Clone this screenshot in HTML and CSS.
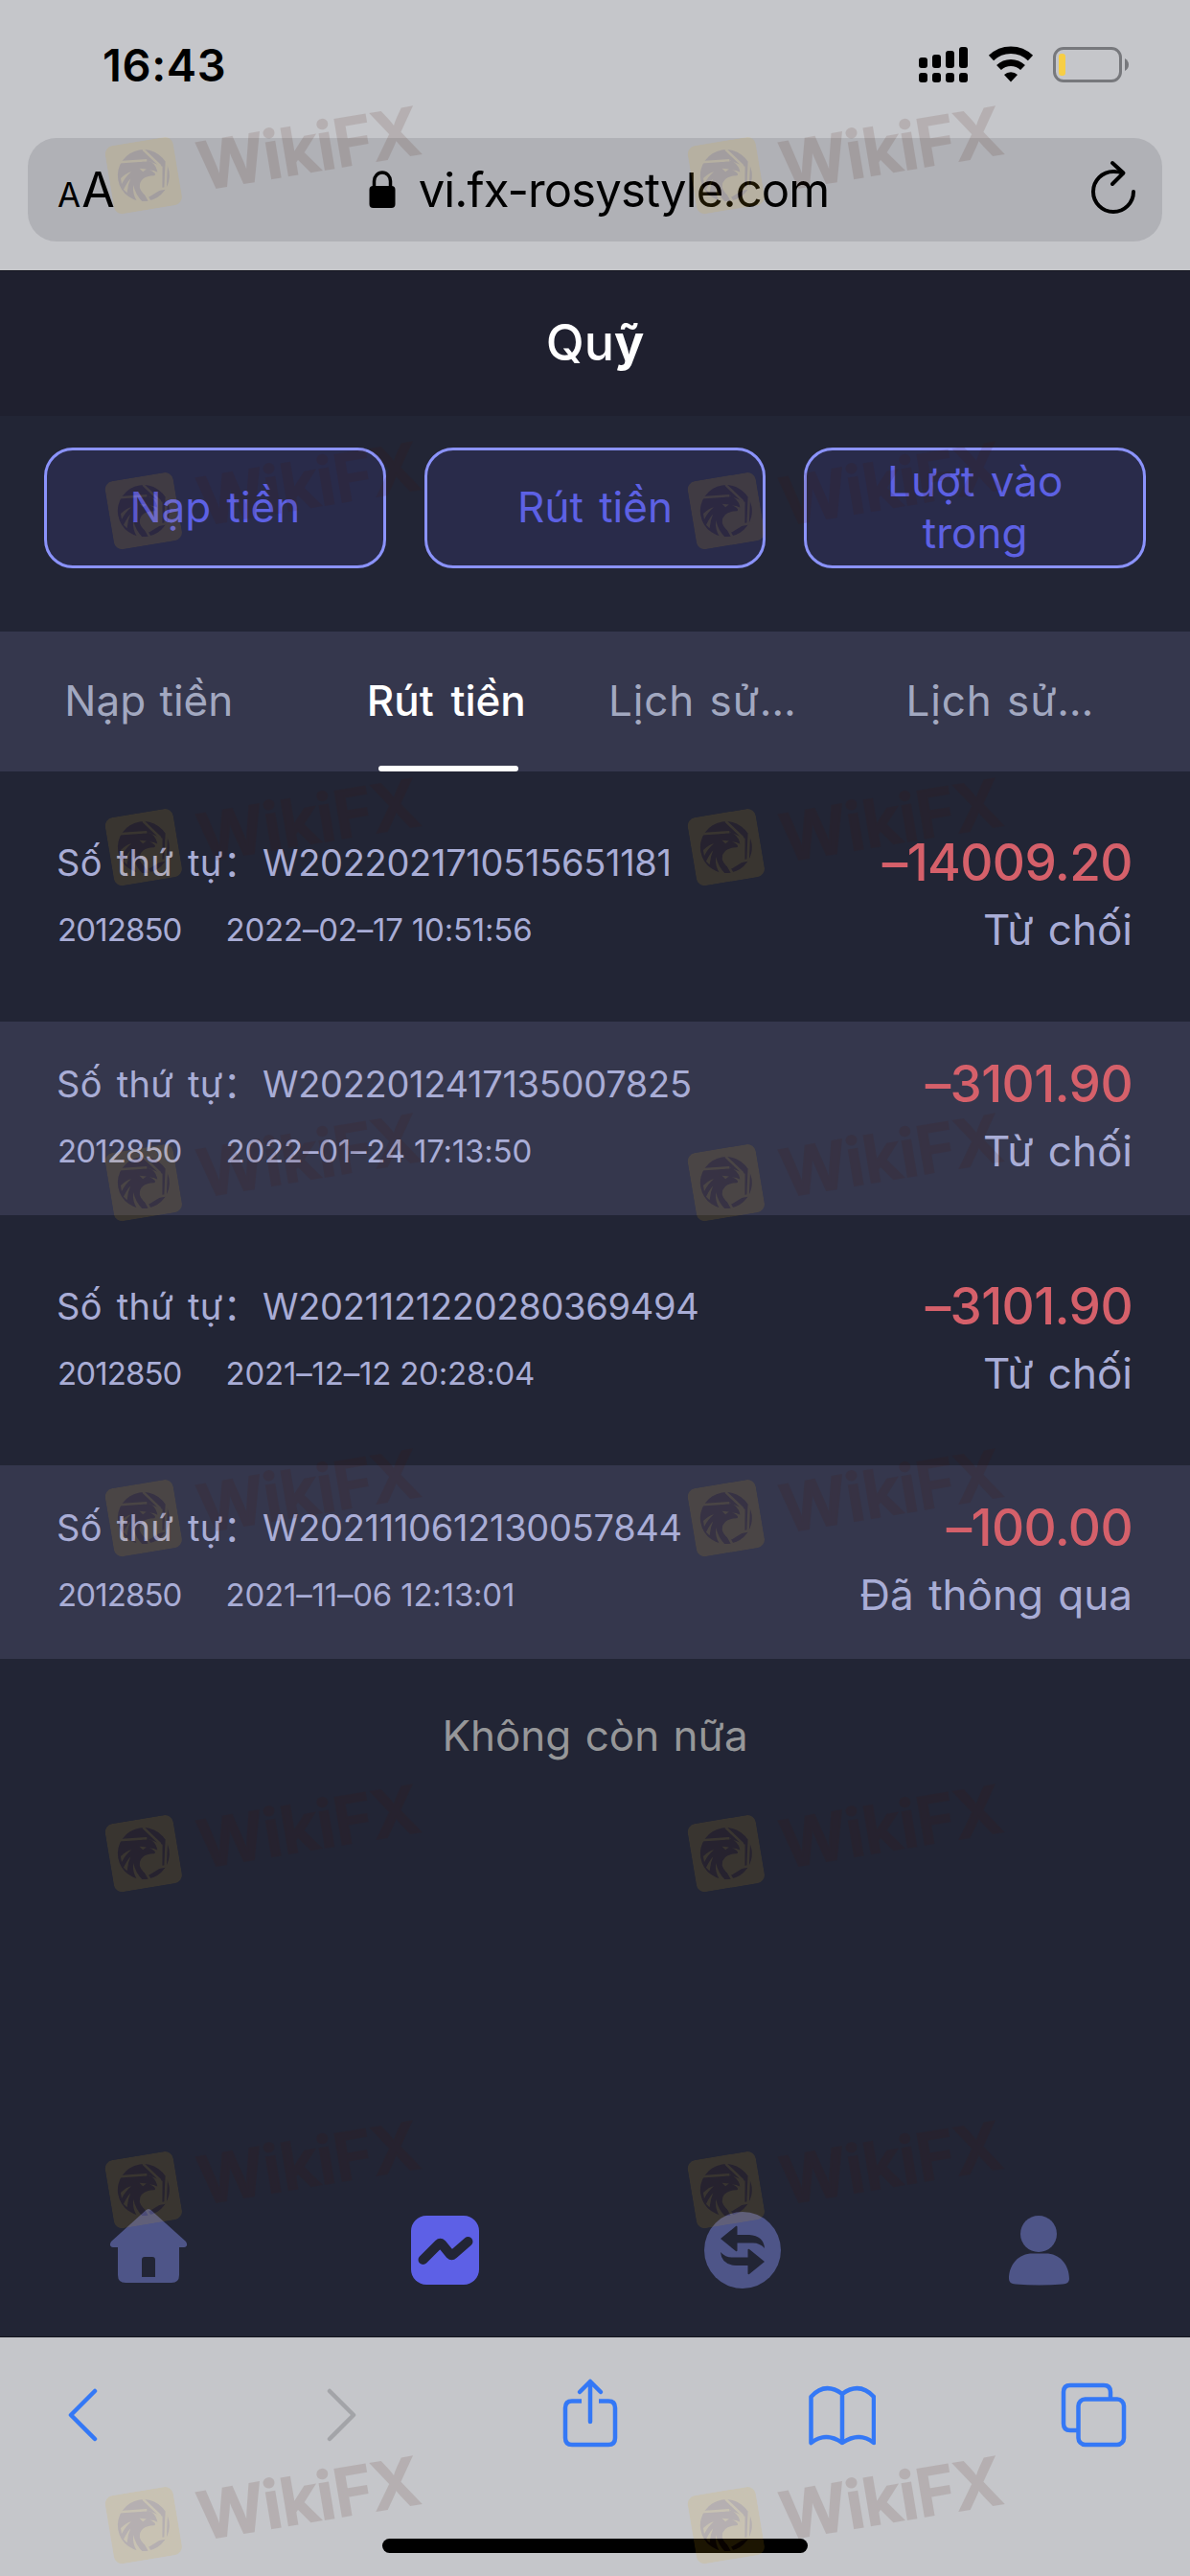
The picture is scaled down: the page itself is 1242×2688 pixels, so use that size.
FILE: index.html
```html
<!DOCTYPE html>
<html lang="vi">
<head>
    <meta charset="UTF-8">
    <meta name="viewport" content="width=device-width, initial-scale=1.0">
    <title>Quỹ</title>
    <link rel="stylesheet" href="styles.css">
</head>
<body>
    <div class="browser-top">
        <div class="status-bar">
            <span class="time">16:43</span>
            <svg class="status-icons" width="222" height="40" viewBox="0 0 222 40">
                <g fill="#000">
                    <rect x="1" y="12" width="9" height="11" rx="3"/>
                    <rect x="15" y="9" width="9" height="14" rx="3"/>
                    <rect x="29" y="5" width="9" height="18" rx="3"/>
                    <rect x="43" y="1" width="9" height="22" rx="3"/>
                    <rect x="1" y="28" width="9" height="10" rx="3"/>
                    <rect x="15" y="28" width="9" height="10" rx="3"/>
                    <rect x="29" y="28" width="9" height="10" rx="3"/>
                    <rect x="43" y="28" width="9" height="10" rx="3"/>
                </g>
                <path d="M76.500 12.500a29.500 29.500 0 0 1 41 0" fill="none" stroke="#000" stroke-width="7.500"/>
                <path d="M84.500 22.500a18 18 0 0 1 25 0" fill="none" stroke="#000" stroke-width="7"/>
                <path d="M97 37.500l-7-7.500a10 10 0 0 1 14 0z"/>
                <rect x="142.500" y="2.500" width="69" height="34" rx="9.500" fill="none" stroke="#77787c" stroke-width="3"/>
                <rect x="147" y="8" width="7" height="23" rx="3" fill="#f7ce45"/>
                <path d="M216 13q4 2.500 4 6.500t-4 6.500z" fill="#77787c"/>
            </svg>
        </div>
        <div class="url-bar">
            <span class="text-size"><small>A</small>A</span>
            <div class="url">
                <svg width="28" height="40" viewBox="0 0 28 40">
                    <rect x="0.500" y="16" width="27" height="23" rx="4"/>
                    <path d="M5.500 18v-7a8.500 9 0 0 1 17 0v7" fill="none" stroke="#000" stroke-width="3.500"/>
                </svg>
                <span>vi.fx-rosystyle.com</span>
            </div>
            <svg class="reload" width="48" height="58" viewBox="0 0 48 58" fill="none" stroke="#000" stroke-width="4" stroke-linecap="round" stroke-linejoin="round">
                <path d="M34 13.500C31 12.500 28 12 24 12A21 21 0 1 0 45 33"/>
                <path d="M23 3l11.500 10.500L23 25"/>
            </svg>
        </div>
    </div>

    <div class="app">
        <div class="header"><h1>Qu<b>ỹ</b></h1></div>

        <div class="actions">
            <button>Nạp tiền</button>
            <button>Rút tiền</button>
            <button>Lượt vào trong</button>
        </div>

        <div class="tabs">
            <div class="tab"><span>Nạp tiền</span></div>
            <div class="tab active"><span>Rút tiền</span></div>
            <div class="tab cut"><span>Lịch sử…</span></div>
            <div class="tab cut"><span>Lịch sử…</span></div>
        </div>

        <div class="list">
            <div class="item">
                <div class="left">
                    <p class="order"><span>Số thứ tự：</span>W2022021710515651181</p>
                    <p class="meta"><span class="uid">2012850</span><span>2022–02–17 10:51:56</span></p>
                </div>
                <div class="right">
                    <p class="amount">–14009.20</p>
                    <p class="state">Từ chối</p>
                </div>
            </div>
            <div class="item">
                <div class="left">
                    <p class="order"><span>Số thứ tự：</span>W2022012417135007825</p>
                    <p class="meta"><span class="uid">2012850</span><span>2022–01–24 17:13:50</span></p>
                </div>
                <div class="right">
                    <p class="amount">–3101.90</p>
                    <p class="state">Từ chối</p>
                </div>
            </div>
            <div class="item">
                <div class="left">
                    <p class="order"><span>Số thứ tự：</span>W2021121220280369494</p>
                    <p class="meta"><span class="uid">2012850</span><span>2021–12–12 20:28:04</span></p>
                </div>
                <div class="right">
                    <p class="amount">–3101.90</p>
                    <p class="state">Từ chối</p>
                </div>
            </div>
            <div class="item">
                <div class="left">
                    <p class="order"><span>Số thứ tự：</span>W2021110612130057844</p>
                    <p class="meta"><span class="uid">2012850</span><span>2021–11–06 12:13:01</span></p>
                </div>
                <div class="right">
                    <p class="amount">–100.00</p>
                    <p class="state">Đã thông qua</p>
                </div>
            </div>
        </div>
        <p class="no-more">Không còn nữa</p>

        <div class="nav">
            <svg width="82" height="86" viewBox="0 0 82 86">
                <path d="M38 1.500q3-3 6 0L80 34q3 5-2 6H73v29q0 8-8 8H17q-8 0-8-8V40H4q-5-1-2-6zM34 53v18h14V53q0-3-3-3h-8q-3 0-3 3z" fill="#4e5588"/>
            </svg>
            <svg width="82" height="86" viewBox="0 0 82 86">
                <rect x="5" y="7" width="71" height="72" rx="16" fill="#5d60e6"/>
                <path d="M17.500 53L34 36.500q1.500-1.500 3 0l9 11q1.500 1.500 3 0L64.500 34" fill="none" stroke="#222535" stroke-width="10" stroke-linecap="round" stroke-linejoin="round"/>
            </svg>
            <svg width="82" height="86" viewBox="0 0 82 86">
                <circle cx="41" cy="43" r="40" fill="#4e5588"/>
                <g fill="#222535">
                    <path id="arrow" d="M18 31L34 18q1.500-1 1.500 1v8H48Q63 28 64 41Q59 35.500 52 35.500H35.500V43q0 2-1.500 1z"/>
                    <use href="#arrow" transform="rotate(180 41 43)"/>
                </g>
            </svg>
            <svg width="82" height="86" viewBox="0 0 82 86" fill="#4e5588">
                <circle cx="40" cy="26" r="19"/>
                <path d="M31 46.500H50C64 48 72 60 72 73Q72 78 65 78.500Q41 80.500 16 78.500Q9 78 9 73C9 60 17 48 31 46.500z"/>
            </svg>
        </div>
    </div>

    <div class="browser-bottom">
        <div class="toolbar">
            <svg width="70" height="80" viewBox="0 0 70 80"><path d="M46 15L21 40l25 25"/></svg>
            <svg class="disabled" width="70" height="80" viewBox="0 0 70 80"><path d="M27 15l25 25-25 25"/></svg>
            <svg width="70" height="80" viewBox="0 0 70 80"><path d="M27 25.500H17q-7 0-7 7V64q0 7 7 7h38q7 0 7-7V32.500q0-7-7-7H45" stroke-linecap="butt"/><path d="M36 47V5M25 16L36 5l11 11"/></svg>
            <svg width="70" height="80" viewBox="0 0 70 80"><path d="M2.500 69V21Q17 5 35 18Q53 5 68 21V69Q53 57 35 69Q18 57 2.500 69zM35 18V69"/></svg>
            <svg width="70" height="80" viewBox="0 0 70 80"><path d="M17 56H10q-7 0-7-7V16q0-7 7-7H45q7 0 7 7v7" stroke-linecap="butt"/><rect x="18.500" y="23.500" width="47.500" height="47.500" rx="7"/></svg>
        </div>
        <div class="home-indicator"></div>
    </div>

    <div class="watermarks" id="watermarks"></div>

    <template id="mark">
        <div class="mark">
            <svg width="72" height="72" viewBox="0 0 72 72">
                <rect width="72" height="72" rx="9" fill="#e1ac12"/>
                <circle cx="36" cy="36" r="27" fill="#461405"/>
                <path d="M40 9L55 29M62 26L56 54M62 53L34 53L38 64M13 18L42 21" fill="none" stroke="#e1ac12" stroke-width="2.500"/>
                <path d="M42 21Q50 24 51 34L43 31Q51 37 47 38Q31 36 30 48Q31 55 38 59L53 53L57 30z" fill="#e1ac12"/>
                <path d="M30 22Q47 19 51 35Q44 30 41 32L47 37Q40 33 36 37L30 32z" fill="#461405"/>
                <path d="M33 28l7 2-4 2zM12 35q7-5 12-5-7 4-12 11zM13 47q5-7 9-10-4 6-6 14zM25 62q-4-9-1-18 0 10 7 20z" fill="#e1ac12"/>
            </svg>
            <span>WikiFX</span>
        </div>
    </template>

    <script>
        let box = document.getElementById('watermarks');
        let mark = document.getElementById('mark');
        for (let i = 0; i < 16; i++) {
            box.appendChild(mark.content.cloneNode(true));
        }
    </script>
</body>
</html>
```
FILE: styles.css
```css
* {
    box-sizing: border-box;
}
body {
    margin: 0;
    width: 1242px;
    height: 2688px;
    position: relative;
    display: flex;
    flex-direction: column;
    font-family: Inter, "Noto Sans CJK SC", sans-serif;
    background-color: #222535;
}
p, h1 {
    margin: 0;
}
svg {
    display: block;
    flex: none;
}

/* browser */
.browser-top {
    height: 283px;
    background: #c5c6ca;
    border-bottom: 1px solid #14151f;
}
.status-bar {
    height: 144px;
    padding: 0 62px 9px 107px;
    display: flex;
    align-items: center;
    justify-content: space-between;
}
.time {
    font-size: 47px;
    font-weight: 600;
    letter-spacing: 0.6px;
}
.url-bar {
    height: 108px;
    margin: 0 29px;
    padding: 0 27px 0 31px;
    border-radius: 30px;
    background: #b0b1b6;
    display: flex;
    align-items: center;
    justify-content: space-between;
}
.text-size {
    width: 70px;
    font-size: 50px;
    white-space: nowrap;
    letter-spacing: -2px;
}
.text-size small {
    font-size: 35px;
    letter-spacing: 1px;
}
.url {
    display: flex;
    align-items: center;
    gap: 24px;
    font-size: 49px;
    letter-spacing: -0.9px;
}
.reload {
    margin: 0 0 4px 18px;
}

/* page */
.app {
    height: 2156px;
    display: flex;
    flex-direction: column;
    border-bottom: 1px solid #14151f;
}
.header {
    height: 151px;
    padding-bottom: 3px;
    background: #1f202f;
    display: flex;
    align-items: center;
    justify-content: center;
}
.header h1 {
    color: #fff;
    font-size: 52px;
    font-weight: 500;
}
.header b {
    font-weight: 700;
}
.actions {
    padding: 33px 46px 66px;
    display: grid;
    grid-template-columns: repeat(3, 1fr);
    gap: 40px;
}
.actions button {
    height: 126px;
    padding: 0 50px 2px;
    border: 3px solid #8b93fb;
    border-radius: 30px;
    background: #292b4a;
    color: #5d61e4;
    font-family: inherit;
    font-size: 44px;
    line-height: 54px;
    word-spacing: 4px;
}
.tabs {
    height: 146px;
    background: #35374d;
    display: grid;
    grid-template-columns: repeat(4, 1fr);
}
.tab {
    position: relative;
    padding: 0 14px 2px;
    display: flex;
    align-items: center;
    justify-content: center;
    color: #a2a8c0;
    font-size: 44px;
    word-spacing: 2px;
    white-space: nowrap;
}
.tab.cut {
    justify-content: flex-start;
    letter-spacing: 0.9px;
}
.tab.active {
    color: #fff;
    font-weight: 500;
    word-spacing: 6px;
}
.tab.active::after {
    content: "";
    position: absolute;
    left: 84px;
    bottom: 0;
    width: 146px;
    height: 6px;
    border-radius: 3px;
    background: #fff;
}

.list {
    padding-top: 29.5px;
    display: flex;
    flex-direction: column;
    gap: 29.5px;
}
.item {
    height: 202px;
    padding: 34px 60px 0;
    display: flex;
    justify-content: space-between;
    color: #a9add6;
}
.item:nth-child(even) {
    background: #35374d;
}
.left, .right {
    display: flex;
    flex-direction: column;
    gap: 8px;
}
.item p {
    height: 62px;
    line-height: 62px;
    display: flex;
    white-space: pre;
}
.order {
    font-size: 38px;
    letter-spacing: -0.3px;
}
.order span {
    width: 214px;
    margin-left: -1px;
    margin-right: 1px;
    letter-spacing: 0.3px;
    word-spacing: 4px;
}
.meta {
    font-size: 33px;
    letter-spacing: -0.2px;
    gap: 46px;
}
.meta .uid {
    letter-spacing: -0.9px;
}
.right p {
    justify-content: flex-end;
}
.amount {
    color: #d5606a;
    font-size: 53px;
    font-weight: 500;
    letter-spacing: -0.6px;
}
.state {
    font-size: 44px;
    word-spacing: 3px;
}
.no-more {
    margin-top: 50px;
    line-height: 60px;
    text-align: center;
    color: #969799;
    font-size: 44px;
    word-spacing: 2px;
}
.nav {
    height: 180px;
    margin-top: auto;
    padding-right: 2px;
    display: grid;
    grid-template-columns: repeat(4, 1fr);
    place-items: center;
}

/* bottom toolbar */
.browser-bottom {
    flex: 1;
    background: #c5c6ca;
}
.toolbar {
    height: 210px;
    padding: 41px 65px 0 53px;
    display: flex;
    justify-content: space-between;
    fill: none;
    stroke: #3478f6;
    stroke-width: 4.5;
    stroke-linecap: round;
    stroke-linejoin: round;
}
.toolbar .disabled {
    stroke: #a3a4a8;
}
.home-indicator {
    width: 444px;
    height: 15px;
    margin: 0 auto;
    border-radius: 8px;
    background: #000;
}

/* watermarks over the whole page */
.watermarks {
    position: absolute;
    top: 101px;
    left: 112px;
    width: 1128px;
    display: grid;
    grid-template-columns: repeat(2, 1fr);
    column-gap: 88px;
    grid-template-rows: repeat(7, 350.3px) 130px;
    opacity: 0.12;
    pointer-events: none;
}
.mark {
    width: 340px;
    height: 120px;
    display: flex;
    align-items: center;
    gap: 22px;
    transform: rotate(-9.5deg);
}
.mark span {
    color: #461405;
    font-size: 68px;
    font-weight: 600;
    line-height: 72px;
    -webkit-text-stroke: 2px #461405;
}
```
